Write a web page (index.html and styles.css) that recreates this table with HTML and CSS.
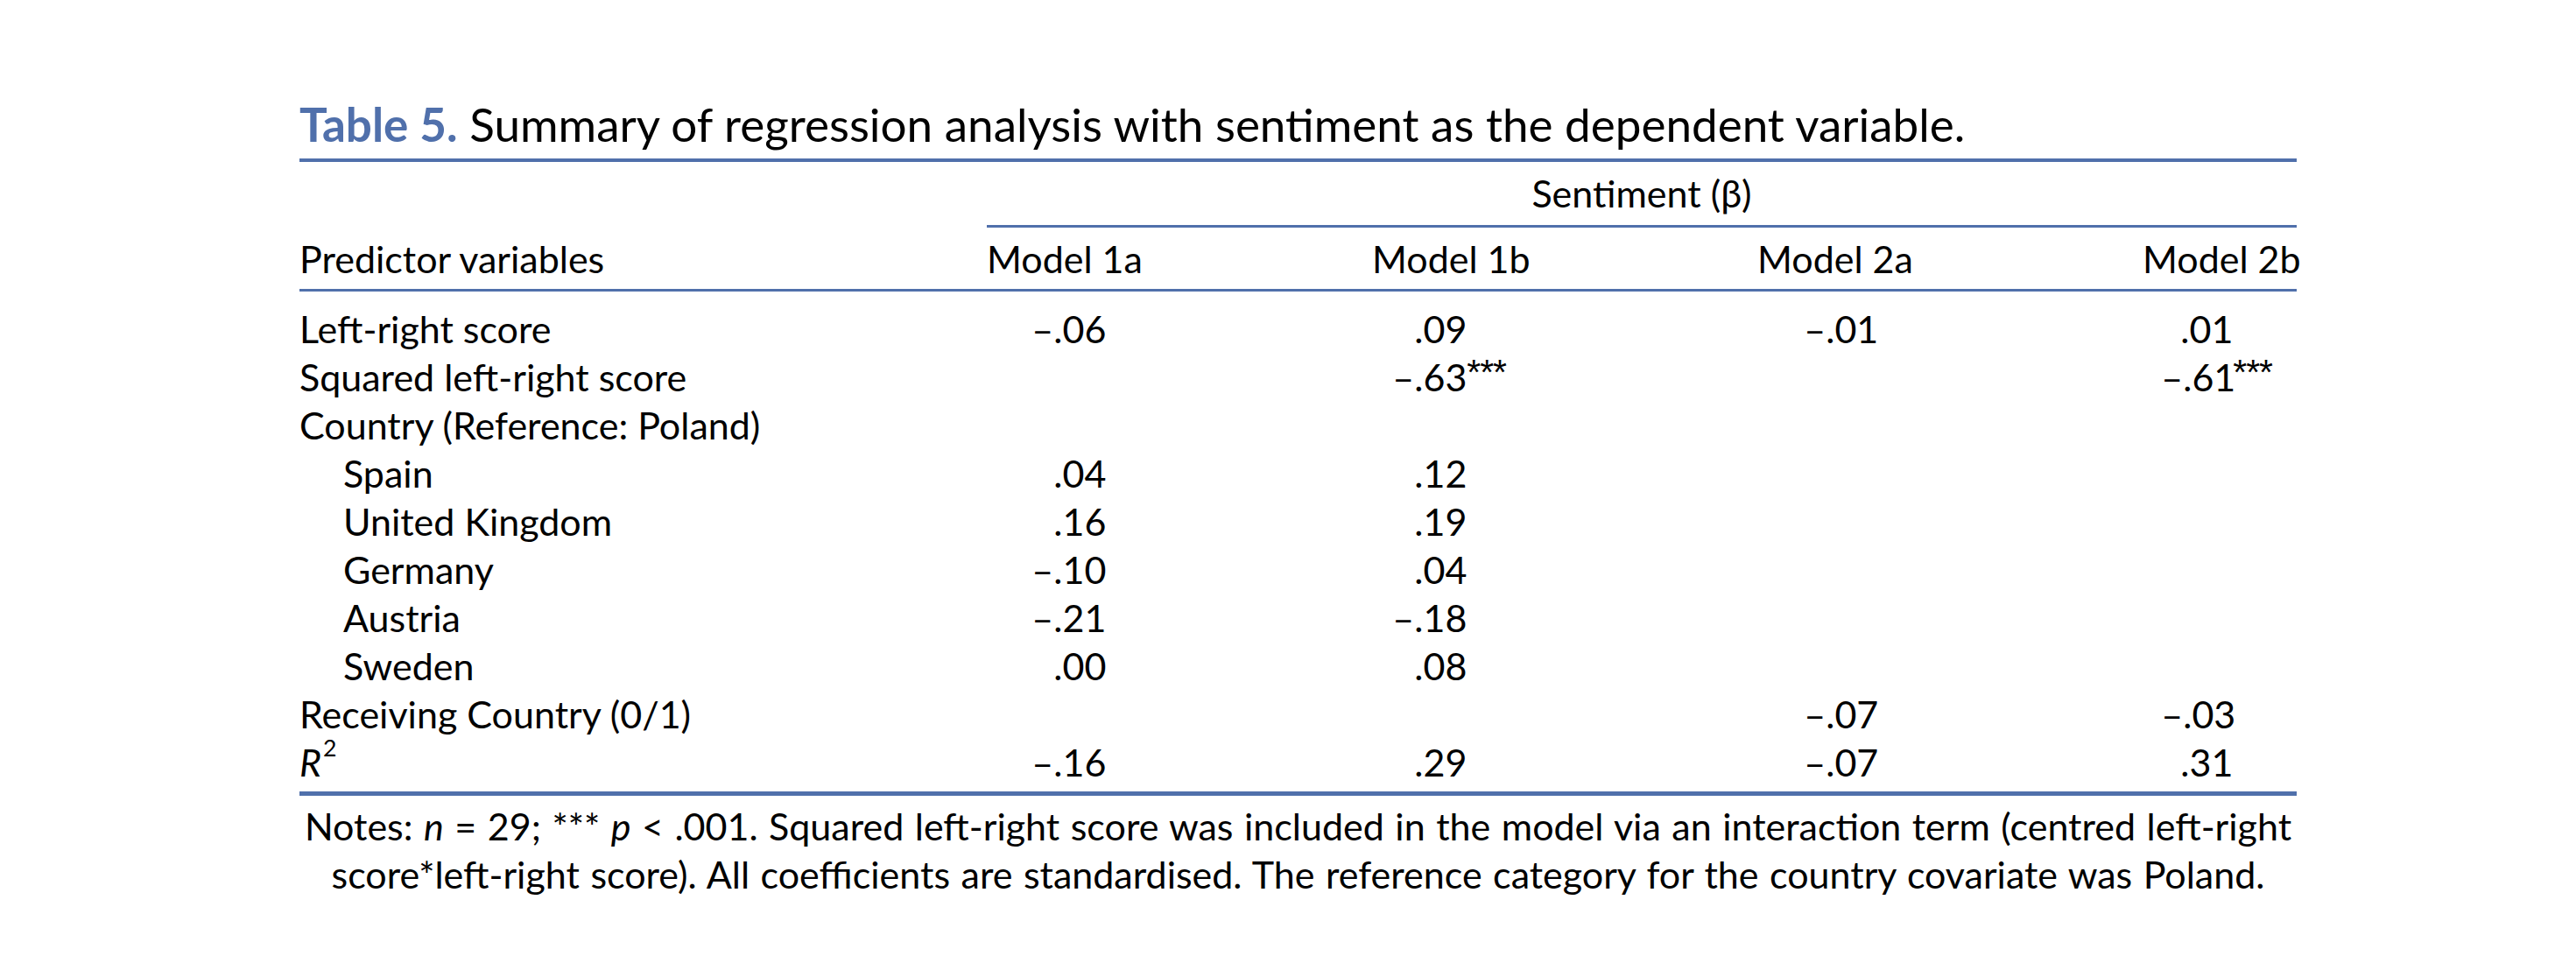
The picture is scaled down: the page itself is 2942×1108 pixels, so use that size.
FILE: index.html
```html
<!DOCTYPE html>
<html lang="en">
<head>
<meta charset="utf-8">
<title>Table 5</title>
<link rel="stylesheet" href="styles.css">
</head>
<body>
<div class="table">
  <div class="caption"><span class="caption-label">Table 5.</span> Summary of regression analysis with sentiment as the dependent variable.</div>

  <div class="grid spanner-row">
    <div class="cell"></div>
    <div class="cell spanner">Sentiment (β)</div>
  </div>

  <div class="grid head-row">
    <div class="cell label">Predictor variables</div>
    <div class="cell head">Model 1a</div>
    <div class="cell head">Model 1b</div>
    <div class="cell head">Model 2a</div>
    <div class="cell head">Model 2b</div>
  </div>

  <div class="grid body-rows">
    <div class="cell label">Left-right score</div>
    <div class="cell val c1a"><span class="n">–.06</span><span class="s"></span></div>
    <div class="cell val c1b"><span class="n">.09</span><span class="s"></span></div>
    <div class="cell val c2a"><span class="n">–.01</span><span class="s"></span></div>
    <div class="cell val c2b"><span class="n">.01</span><span class="s"></span></div>

    <div class="cell label">Squared left-right score</div>
    <div class="cell val c1a"><span class="n"></span><span class="s"></span></div>
    <div class="cell val c1b"><span class="n">–.63</span><span class="s">***</span></div>
    <div class="cell val c2a"><span class="n"></span><span class="s"></span></div>
    <div class="cell val c2b"><span class="n">–.61</span><span class="s">***</span></div>

    <div class="cell label">Country (Reference: Poland)</div>
    <div class="cell"></div>
    <div class="cell"></div>
    <div class="cell"></div>
    <div class="cell"></div>

    <div class="cell label sub">Spain</div>
    <div class="cell val c1a"><span class="n">.04</span><span class="s"></span></div>
    <div class="cell val c1b"><span class="n">.12</span><span class="s"></span></div>
    <div class="cell"></div>
    <div class="cell"></div>

    <div class="cell label sub">United Kingdom</div>
    <div class="cell val c1a"><span class="n">.16</span><span class="s"></span></div>
    <div class="cell val c1b"><span class="n">.19</span><span class="s"></span></div>
    <div class="cell"></div>
    <div class="cell"></div>

    <div class="cell label sub">Germany</div>
    <div class="cell val c1a"><span class="n">–.10</span><span class="s"></span></div>
    <div class="cell val c1b"><span class="n">.04</span><span class="s"></span></div>
    <div class="cell"></div>
    <div class="cell"></div>

    <div class="cell label sub">Austria</div>
    <div class="cell val c1a"><span class="n">–.21</span><span class="s"></span></div>
    <div class="cell val c1b"><span class="n">–.18</span><span class="s"></span></div>
    <div class="cell"></div>
    <div class="cell"></div>

    <div class="cell label sub">Sweden</div>
    <div class="cell val c1a"><span class="n">.00</span><span class="s"></span></div>
    <div class="cell val c1b"><span class="n">.08</span><span class="s"></span></div>
    <div class="cell"></div>
    <div class="cell"></div>

    <div class="cell label">Receiving Country (0/1)</div>
    <div class="cell"></div>
    <div class="cell"></div>
    <div class="cell val c2a"><span class="n">–.07</span><span class="s"></span></div>
    <div class="cell val c2b"><span class="n">–.03</span><span class="s"></span></div>

    <div class="cell label"><i>R</i><sup class="sq">2</sup></div>
    <div class="cell val c1a"><span class="n">–.16</span><span class="s"></span></div>
    <div class="cell val c1b"><span class="n">.29</span><span class="s"></span></div>
    <div class="cell val c2a"><span class="n">–.07</span><span class="s"></span></div>
    <div class="cell val c2b"><span class="n">.31</span><span class="s"></span></div>
  </div>

  <div class="notes">Notes: <i>n</i> = 29; *** <i>p</i> &lt; .001. Squared left-right score was included in the model via an interaction term (centred left-right<br>score*left-right score). All coefficients are standardised. The reference category for the country covariate was Poland.</div>
</div>
</body>
</html>
```

FILE: styles.css
```css
html, body {
  margin: 0;
  padding: 0;
  background: #ffffff;
}

body {
  font-family: Lato, "Liberation Sans", sans-serif;
  color: #000000;
  font-size: 43px;
}

.table {
  width: 2281px;
  margin: 109px 0 0 342px;
}

.caption {
  font-size: 53px;
  line-height: 66px;
  padding-bottom: 6px;
  border-bottom: 4px solid #5070ab;
  white-space: nowrap;
}

.caption-label {
  color: #5070ab;
  font-weight: 700;
}

.grid {
  display: grid;
  grid-template-columns: 1fr repeat(4, 176px);
  column-gap: 264px;
  line-height: 55px;
}

.cell {
  white-space: nowrap;
}

.spanner-row {
  padding-top: 8px;
}

.spanner {
  grid-column: 2 / 6;
  text-align: center;
  padding-bottom: 9px;
  border-bottom: 3px solid #5070ab;
}

.head-row {
  padding-top: 8px;
  padding-bottom: 7px;
  border-bottom: 3px solid #5070ab;
}

.head {
  text-align: center;
}

.body-rows {
  grid-auto-rows: 55px;
  padding-top: 15px;
  padding-bottom: 6px;
  border-bottom: 5px solid #5070ab;
}

.label.sub {
  padding-left: 50px;
}

.val {
  display: flex;
  justify-content: center;
}

.val .n {
  display: inline-block;
  text-align: right;
}

.val .s {
  display: inline-block;
  text-align: left;
  font-family: "Liberation Sans", sans-serif;
  font-size: 0.95em;
  letter-spacing: -1px;
  position: relative;
  top: -0.12em;
}

.c1a .n { width: 86px; }
.c1a .s { width: 0; }
.c1b .n { width: 88px; }
.c1b .s { width: 58px; }
.c2a .n { width: 80px; }
.c2a .s { width: 0; }
.c2b .n { width: 82px; }
.c2b .s { width: 62px; }

.sq {
  font-size: 0.62em;
  line-height: 0;
  vertical-align: 0.85em;
  margin-left: 2px;
}

.notes {
  text-align: center;
  line-height: 55px;
  padding-top: 7px;
  white-space: nowrap;
  word-spacing: 1.5px;
}
```
